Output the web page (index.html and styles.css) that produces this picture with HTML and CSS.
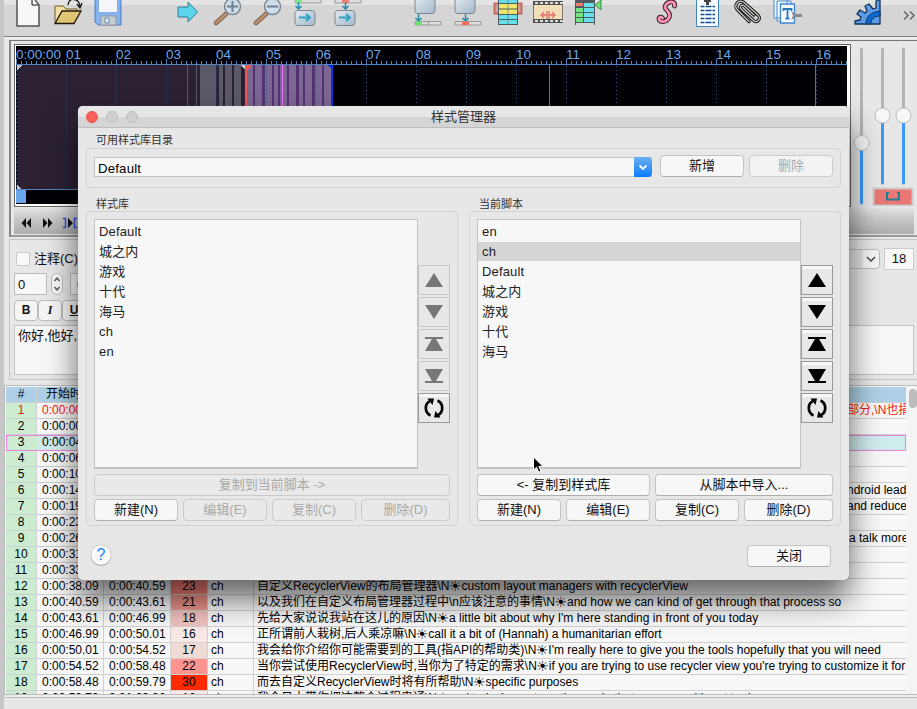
FILE: index.html
```html
<!DOCTYPE html>
<html lang="zh-CN">
<head>
<meta charset="utf-8">
<title>样式管理器</title>
<link rel="stylesheet" href="styles.css">
</head>
<body>
<svg width="0" height="0" class="defs">
  <defs>
    <linearGradient id="steel" x1="0" y1="0" x2="1" y2="1"><stop offset="0" stop-color="#e4ebf1"/><stop offset="1" stop-color="#a3b8ca"/></linearGradient>
    <symbol id="up" viewBox="0 0 30 28"><path d="M15 7 24 21H6z"/></symbol>
    <symbol id="down" viewBox="0 0 30 28"><path d="M15 21 24 7H6z"/></symbol>
    <symbol id="top" viewBox="0 0 30 28"><path d="M6 7h18v2h-7l7 12H6l7-12H6z"/></symbol>
    <symbol id="bottom" viewBox="0 0 30 28"><path d="M6 21h18v-2h-7l7-12H6l7 12H6z"/></symbol>
    <symbol id="sort" viewBox="0 0 30 28"><path d="M11.500 21.500A8.300 8.300 0 0 1 11 6.800M18.500 6.500A8.300 8.300 0 0 1 19 21.200" fill="none" stroke="currentColor" stroke-width="2.700"/><path d="M8.500 4.500H15l-1.500 6.500zM21.500 23.500H15l1.500-6.500z"/></symbol>
  </defs>
</svg>
<div class="app">
  <div class="toolbar">
    <svg viewBox="0 0 40 36"><path d="M9-3h16l6 8v21H9z" fill="#f8f8f8" stroke="#555" stroke-width="1.500"/><path d="M24-1v6h6" fill="none" stroke="#111"/></svg>
    <svg viewBox="0 0 40 36"><path d="M7 22V6h8l3 3h11v5" fill="#f1dfa5" stroke="#765b28"/><path d="M7 23.500 14 11h19l-7 12.500z" fill="#dfc574" stroke="#221a08" stroke-width="1.300"/><path d="M20 5c1-8 11-7 12 1m-3-2 3 4 2-5" fill="none" stroke="#111" stroke-width="1.300"/></svg>
    <svg viewBox="0 0 40 36"><path d="M7-3h26v28H10l-3-3z" fill="#85b3ef" stroke="#4b7cc4"/><path d="M11-1h18v13H11z" fill="#f4f6f9"/><path d="M13 16h15v9H13z" fill="#c7ccd1" stroke="#999"/><path d="M17 18h4v5h-4z" fill="#eee" stroke="#5d8bc5"/></svg>
    <i></i>
    <svg viewBox="0 0 40 36"><path d="M10 7h10V2l9.500 10L20 22v-5H10z" fill="#5bd4ec" stroke="#357b91"/></svg>
    <svg viewBox="0 0 40 36"><path d="m18 14-10 9" stroke="#785a43" stroke-width="4.500" stroke-linecap="round"/><path d="m18 14-10 9" stroke="#b99073" stroke-width="3" stroke-linecap="round"/><circle cx="24.500" cy="6.500" r="8" fill="#cedde9" stroke="#7d8790" stroke-width="1.500"/><path d="M19 6.500h11M24.500 1v11" stroke="#70808e" stroke-width="2"/></svg>
    <svg viewBox="0 0 40 36"><path d="m18 14-10 9" stroke="#785a43" stroke-width="4.500" stroke-linecap="round"/><path d="m18 14-10 9" stroke="#b99073" stroke-width="3" stroke-linecap="round"/><circle cx="24.500" cy="6.500" r="8" fill="#cedde9" stroke="#7d8790" stroke-width="1.500"/><path d="M19 6.500h11" stroke="#70808e" stroke-width="2"/></svg>
    <svg viewBox="0 0 40 36"><path d="M7-2h26v5H7z" fill="#ddd" stroke="#999"/><path d="M7-2h7v5H7z" fill="#7be98a"/><path d="M10.500 2v6m-3-2 3 3 3-3" stroke="#238daa" stroke-width="1.500" fill="none"/><rect x="7" y="10.500" width="20" height="15" rx="3" fill="url(#steel)" stroke="#7d8790"/><path d="M11 17.500h11m-4-3.500 4 3.500-4 3.500" fill="none" stroke="#2ba4c6" stroke-width="2"/></svg>
    <svg viewBox="0 0 40 36"><path d="M7-2h26v5H7z" fill="#ddd" stroke="#999"/><path d="M14-2h7v5h-7z" fill="#ed8277"/><path d="M17.500 2v6m-3-2 3 3 3-3" stroke="#238daa" stroke-width="1.500" fill="none"/><rect x="7" y="10.500" width="20" height="15" rx="3" fill="url(#steel)" stroke="#7d8790"/><path d="M11 17.500h11m-4-3.500 4 3.500-4 3.500" fill="none" stroke="#2ba4c6" stroke-width="2"/></svg>
    <i></i>
    <svg viewBox="0 0 40 36"><rect x="7" y="-4" width="20" height="17.500" rx="3" fill="url(#steel)" stroke="#7d8790"/><path d="M10.500 14v6m-3-2 3 3 3-3" stroke="#238daa" stroke-width="1.500" fill="none"/><path d="M7 21.500h26v3.500H7zM20.500 21v4" fill="#ddd" stroke="#999"/><path d="M7 21.500h7v3.500H7z" fill="#6ae36f"/></svg>
    <svg viewBox="0 0 40 36"><rect x="7" y="-4" width="20" height="17.500" rx="3" fill="url(#steel)" stroke="#7d8790"/><path d="M17.500 14v6m-3-2 3 3 3-3" stroke="#238daa" stroke-width="1.500" fill="none"/><path d="M7 21.500h26v3.500H7z" fill="#ddd" stroke="#999"/><path d="M14 21.500h7v3.500h-7z" fill="#ee6d60"/></svg>
    <svg viewBox="0 0 40 36"><path d="M6.500 3.500h27v10h-27z" fill="#d3a199" stroke="#c46b61" stroke-width="2"/><path d="M10-1h20v26H10z" fill="#4e5b62"/><path d="M11 0h18v3H11zM11 15h18v4H11zM11 20h18v4H11z" fill="#65dfea"/><path d="M11 4h18v4.500H11zM11 9.500h18V14H11z" fill="#eee56d"/><path d="M20 0v25" stroke="#697777" stroke-width=".7"/></svg>
    <svg viewBox="0 0 40 36"><path d="M5 1h30v22H5z" fill="#f0dfb7"/><path d="M5 3h30M5 21h30" stroke="#4e5052" stroke-width="4"/><path d="M7 3h28M7 21h28" stroke="#ddd" stroke-width="2" stroke-dasharray="3 2"/><path d="M5.500 5v14M34.500 5v14" stroke="#777"/><path d="M13 15h6m2 0h6M16 12l-3 3 3 3m8-6 3 3-3 3M19 11v8m2-8v8" fill="none" stroke="#e2736d" stroke-width="1.300"/></svg>
    <svg viewBox="0 0 40 36"><path d="M7-1h20v26h-1v-2H8v2H7z" fill="#50595e"/><path d="M8 3h7v3H8z" fill="#ef7d6c"/><path d="M8 8h7v4H8zM8 13h7v4H8zM8 18h7v4H8z" fill="#72e482"/><path d="M16 3h10v4H16zM16 8h10v4H16zM16 13h10v4H16zM16 18h10v4H16z" fill="#68dfea"/><path d="m27 5 6-5v10z" fill="#72df7d" stroke="#43884b"/></svg>
    <i></i>
    <svg viewBox="0 0 40 36"><path id="curl" d="M26.500 6c1-4-3-5-6-3.500-4 2-4.500 5.500-1.500 8 3.500 3 3.500 7-.5 10-3 2-7.500 1-7.500-1.500 0-2 2.500-2.500 3.500-1" fill="none" stroke="#3a232b" stroke-width="4.800" stroke-linecap="round"/><path d="M26.500 6c1-4-3-5-6-3.500-4 2-4.500 5.500-1.500 8 3.500 3 3.500 7-.5 10-3 2-7.500 1-7.500-1.500 0-2 2.500-2.500 3.500-1" fill="none" stroke="#ff91b2" stroke-width="2.800" stroke-linecap="round"/></svg>
    <svg viewBox="0 0 40 36"><path d="M8.500-2h22v28.500h-22z" fill="#fafcff" stroke="#3d83bd"/><path d="M16 0h7v2h-2v3h-3V2h-2z" fill="#444"/><path d="M12.500 6.500h14.500M12.500 10.500h14.500M12.500 14.500h14.500M12.500 18.500h14.500M12.500 22.500h14.500" stroke="#0c4f91" stroke-width="1.300" stroke-dasharray="4 1 6 1"/></svg>
    <svg viewBox="0 0 40 36"><path d="M21 21.500 9.500 10C5 5.500 11-2 16 2.500L30 15c3.500 4-1 8.500-4.500 5.500L13.500 9.500C10.500 6.500 14 4 16.500 6L26 15" fill="none" stroke="#1c1c1c" stroke-width="3.200" stroke-linecap="round"/><path d="M21 21.500 9.500 10C5 5.500 11-2 16 2.500L30 15c3.500 4-1 8.500-4.500 5.500L13.500 9.500C10.500 6.500 14 4 16.500 6L26 15" fill="none" stroke="#d2d0c8" stroke-width="1.100" stroke-linecap="round"/></svg>
    <svg viewBox="0 0 40 36"><path d="M6-2h13v20H6zM9 1h14v20H9z" fill="#edf5fc" stroke="#4a88c5"/><path d="M12.500 4h14v19h-14z" fill="#f6faff" stroke="#3e86d1" stroke-width="1.300"/><path d="M15.500 11V9h8v2M19.500 9v9.500m-2 0h4" stroke="#2876bc" stroke-width="1.800" fill="none"/><path d="m23 11 5 3h6v3h-6l-5 3 2-4.500z" fill="#858b91"/></svg>
    <i></i>
    <svg viewBox="0 0 40 36"><path d="M7 24v-3l5-1 1-3-4-3 3-4 5 3 2-2-2-5 4-2 4 5 3-1V1l4-2v25z" fill="#5c9ce8" stroke="#153153" stroke-width="1.300" stroke-linejoin="round"/><path d="M18 24c0-8 5-12 14-13v5c-6 0-9 3-9 8z" fill="#0b67d2" stroke="#15395e"/></svg>
    <svg class="more" viewBox="0 0 16 36"><path d="m1 11.500 4 4-4 4m6-8 4 4-4 4" fill="none" stroke="#666" stroke-width="1.500"/></svg>
  </div>

  <div class="video">
    <div class="wavebox">
      <svg class="wave" width="831" height="158" viewBox="16 46 831 158" shape-rendering="crispEdges">
        <defs><pattern id="ticks" x="16" y="60" width="5" height="5" patternUnits="userSpaceOnUse"><path d="M0 1h1v4H0z" fill="#5185c2"/></pattern>
        <pattern id="secs" x="16" y="58" width="50" height="131" patternUnits="userSpaceOnUse"><path d="M0 1h1v6H0z" fill="#5185c2"/><path d="M.5 8v123" stroke="#245890" stroke-dasharray="1 3"/></pattern></defs>
        <path d="M16 46h831v158H16z" fill="#000006"/>
        <path d="M17 65h228v124H17z" fill="#2b2133"/>
        <path d="M187 65h1v124h-1zM196 65h1v124h-1zM200 65h16v124h-16zM219 65h4v124h-4zM225 65h7v124h-7zM234 65h7v124h-7z" fill="#5b5968"/>
        <path d="M247 65h84v124h-84z" fill="#7c6692"/>
        <path d="M253 65h2v124h-2zM262 65h3v124h-3zM272 65h2v124h-2zM278 65h2v124h-2zM287 65h2v124h-2zM296 65h3v124h-3zM303 65h2v124h-2zM312 65h3v124h-3zM322 65h2v124h-2z" fill="#533272"/>
        <path d="M245 65h2v124h-2zM247 65h5l-5 5z" fill="#ed5650"/>
        <path d="M331 65h2v124h-2zM327 65h4v4z" fill="#0734df"/>
        <path d="M17 65h5l-5 5zM240 65h5v5zM17 185l4 4h-4z" fill="#c9c9c9"/>
        <path d="M16 60h831v5H16z" fill="url(#ticks)"/><path d="M16 58h831v131H16z" fill="url(#secs)"/>
        <path d="M282 65h1v124h-1z" fill="#f36eff"/><path d="M549 65h1v124h-1zM815 65h1v124h-1z" fill="#c633d3"/>
        <path d="M16 64h831v1H16zM16 189h831v1H16z" fill="#5185c2"/>
        <path d="M16 190h10v13H16z" fill="#69a5eb"/>
        <g class="rulertext"><text x="16" y="59" textLength="45">0:00:00</text><text x="66" y="59">01</text><text x="116" y="59">02</text><text x="166" y="59">03</text><text x="216" y="59">04</text><text x="266" y="59">05</text><text x="316" y="59">06</text><text x="366" y="59">07</text><text x="416" y="59">08</text><text x="466" y="59">09</text><text x="516" y="59">10</text><text x="566" y="59">11</text><text x="616" y="59">12</text><text x="666" y="59">13</text><text x="716" y="59">14</text><text x="766" y="59">15</text><text x="816" y="59">16</text></g>
      </svg>
    </div>
    <div class="sliders">
      <svg width="64" height="164" viewBox="852 42 64 164">
        <g stroke-width="3" stroke-linecap="round"><path d="M861.500 49v94M882.500 49v66M903.500 49v66" stroke="#b4b4b4"/><path d="M861.500 143v60M882.500 115v68M903.500 115v68" stroke="#3b99f8"/></g>
        <g fill="#f7f7f7" stroke="#bbb"><circle cx="861.500" cy="143" r="7.500"/><circle cx="882.500" cy="115.500" r="7.500"/><circle cx="903.500" cy="115.500" r="7.500"/></g>
        <path d="M873.500 188.500h39v17h-39z" fill="#e97773" stroke="#ccc" stroke-width="2"/><path d="M887 193v6.500h12V193m-13 0h3m8 0h3" fill="none" stroke="#247e93" stroke-width="2"/>
      </svg>
    </div>
    <div class="transport">
      <svg width="70" height="26" viewBox="14 208 70 26"><path d="m26 218-4.500 5 4.500 5zM31 218l-4.500 5 4.500 5zM43 218l4.500 5-4.500 5zM48 218l4.500 5-4.500 5zM68 218l5 5-5 5z" fill="#111"/><path d="M63 218.500h2.500v9H63M77 218.500h-2.500v9H77" fill="none" stroke="#3550dc" stroke-width="1.500"/></svg>
    </div>
  </div>

  <div class="editor">
    <div class="erow one"><span class="check"></span><span>注释(C)</span><span class="fontcombo"><svg width="16" height="18"><path d="m4 7 4 4 4-4" fill="none" stroke="#444" stroke-width="1.500"/></svg></span><span class="size">18</span></div>
    <div class="erow two"><span class="num">0</span><svg class="spin" width="12" height="22"><rect x=".5" y=".5" width="11" height="21" rx="5" fill="#f7f7f7" stroke="#bbb"/><path d="m3.500 8 2.500-3 2.500 3M3.500 14l2.500 3 2.500-3" fill="none" stroke="#555" stroke-width="1.400"/></svg><span class="num second">0</span></div>
    <div class="erow three"><b>B</b><em>I</em><u>U</u></div>
    <div class="textarea">你好,他好,大</div>
  </div>

  <div class="gridwrap">
    <div class="grid">
      <div class="r head"><span>#</span><span>开始时间</span><span></span><span></span><span></span><span></span></div>
      <div class="r red"><span>1</span><span>0:00:00</span><span></span><span></span><span></span><span class="tail">部分,\N也捐</span></div>
      <div class="r"><span>2</span><span>0:00:00</span><span></span><span></span><span></span><span></span></div>
      <div class="r sel"><span>3</span><span>0:00:04</span><span></span><span></span><span></span><span></span></div>
      <div class="r"><span>4</span><span>0:00:06</span><span></span><span></span><span></span><span></span></div>
      <div class="r"><span>5</span><span>0:00:10</span><span></span><span></span><span></span><span></span></div>
      <div class="r"><span>6</span><span>0:00:14</span><span></span><span></span><span></span><span class="tail">ndroid lead</span></div>
      <div class="r"><span>7</span><span>0:00:19</span><span></span><span></span><span></span><span class="tail">and reduce</span></div>
      <div class="r"><span>8</span><span>0:00:23</span><span></span><span></span><span></span><span></span></div>
      <div class="r"><span>9</span><span>0:00:26</span><span></span><span></span><span></span><span class="tail late">a talk more</span></div>
      <div class="r"><span>10</span><span>0:00:31</span><span></span><span></span><span></span><span></span></div>
      <div class="r"><span>11</span><span>0:00:33</span><span></span><span></span><span></span><span></span></div>
      <div class="r"><span>12</span><span>0:00:38.09</span><span>0:00:40.59</span><span class="c23">23</span><span>ch</span><span>自定义RecyclerView的布局管理器\N<s>☀</s>custom layout managers with recyclerView</span></div>
      <div class="r"><span>13</span><span>0:00:40.59</span><span>0:00:43.61</span><span class="c21">21</span><span>ch</span><span>以及我们在自定义布局管理器过程中\n应该注意的事情\N<s>☀</s>and how we can kind of get through that process so</span></div>
      <div class="r"><span>14</span><span>0:00:43.61</span><span>0:00:46.99</span><span class="c18">18</span><span>ch</span><span>先给大家说说我站在这儿的原因\N<s>☀</s>a little bit about why I'm here standing in front of you today</span></div>
      <div class="r"><span>15</span><span>0:00:46.99</span><span>0:00:50.01</span><span class="c16">16</span><span>ch</span><span>正所谓前人栽树,后人乘凉嘛\N<s>☀</s>call it a bit of (Hannah) a humanitarian effort</span></div>
      <div class="r"><span>16</span><span>0:00:50.01</span><span>0:00:54.52</span><span class="c17">17</span><span>ch</span><span>我会给你介绍你可能需要到的工具(指API的帮助类)\N<s>☀</s>I'm really here to give you the tools hopefully that you will need</span></div>
      <div class="r"><span>17</span><span>0:00:54.52</span><span>0:00:58.48</span><span class="c22">22</span><span>ch</span><span>当你尝试使用RecyclerView时,当你为了特定的需求\N<s>☀</s>if you are trying to use recycler view you're trying to customize it for</span></div>
      <div class="r"><span>18</span><span>0:00:58.48</span><span>0:00:59.79</span><span class="c30">30</span><span>ch</span><span>而去自定义RecyclerView时将有所帮助\N<s>☀</s>specific purposes</span></div>
      <div class="r"><span>19</span><span>0:00:59.79</span><span>0:01:03.36</span><span class="c16">16</span><span>ch</span><span>我今日大带你把这整个过程串通\N<s>☀</s>and to laying out another node that can now with out to do</span></div>
    </div>
    <div class="scroll"><i></i></div>
  </div>
</div>

<div class="dialog">
  <div class="title"><span class="lights"><i></i><i></i><i></i></span>样式管理器</div>
  <div class="label">可用样式库目录</div>
  <div class="group catalog">
    <div class="combo"><span>Default</span><svg width="18" height="20"><path d="m5.500 8.500 3.500 3.500 3.500-3.500" fill="none" stroke="#fff" stroke-width="1.800"/></svg></div>
    <button>新增</button><button disabled>删除</button>
  </div>
  <div class="columns">
    <div class="col">
      <div class="label">样式库</div>
      <div class="group storage">
        <div class="pick">
          <ul><li>Default</li><li>城之内</li><li>游戏</li><li>十代</li><li>海马</li><li>ch</li><li>en</li></ul>
          <div class="moves"><span class="off"><svg><use href="#up"/></svg></span><span class="off"><svg><use href="#down"/></svg></span><span class="off"><svg><use href="#top"/></svg></span><span class="off"><svg><use href="#bottom"/></svg></span><span><svg><use href="#sort"/></svg></span></div>
        </div>
        <div class="actions"><button class="full" disabled>复制到当前脚本 -&gt;</button><button>新建(N)</button><button disabled>编辑(E)</button><button disabled>复制(C)</button><button disabled>删除(D)</button></div>
      </div>
    </div>
    <div class="col">
      <div class="label">当前脚本</div>
      <div class="group storage">
        <div class="pick">
          <ul><li>en</li><li class="on">ch</li><li>Default</li><li>城之内</li><li>游戏</li><li>十代</li><li>海马</li></ul>
          <div class="moves"><span><svg><use href="#up"/></svg></span><span><svg><use href="#down"/></svg></span><span><svg><use href="#top"/></svg></span><span><svg><use href="#bottom"/></svg></span><span><svg><use href="#sort"/></svg></span></div>
        </div>
        <div class="actions"><button class="half">&lt;- 复制到样式库</button><button class="half">从脚本中导入...</button><button>新建(N)</button><button>编辑(E)</button><button>复制(C)</button><button>删除(D)</button></div>
      </div>
    </div>
  </div>
  <div class="foot"><span class="help">?</span><button>关闭</button></div>
</div>
<svg class="cursor" width="13" height="19"><path d="M1.500 1v13l3-2.800 2.200 5 2.300-1-2.200-4.800h4.200z" fill="#000" stroke="#fff"/></svg>
</body>
</html>
```
FILE: styles.css
```css
* { box-sizing: border-box; }
body {
  margin: 0; width: 917px; height: 709px; overflow: hidden; position: relative;
  background: #c6c6c6; color: #111;
  font: 13px/20px "Liberation Sans", "Noto Sans CJK SC", sans-serif;
}
.defs { position: absolute; }
.app { margin-left: 4px; height: 709px; background: #e7e7e7; display: flex; flex-direction: column; overflow: hidden; }
.toolbar {
  height: 39px; flex: none; padding-left: 4px; display: grid; grid-template-columns: repeat(22, 40px) 14px;
  background: linear-gradient(#e4e4e4 5px, #d5d5d5 5px, #d5d5d5 36px, #777 36px, #888 37px, #eee 37px);
}
.toolbar svg { width: 40px; height: 36px; }
.toolbar .more { width: 16px; margin-left: 15px; }

.video {
  flex: none; height: 197px; margin: 1px 0 0 5px; padding: 3px 0 0 3px;
  border-top: 1px solid #777; border-left: 2px solid #888; border-bottom: 2px solid #999;
  display: grid; grid-template-columns: 837px 1fr; grid-template-rows: 163px 26px; row-gap: 1px;
}
.wavebox { border: 1px solid #666; background: #fff; padding: 1px; height: 163px; margin: 0; }
.wave { display: block; }
.rulertext { font: 13.500px "Liberation Sans", sans-serif; fill: #6ea6ea; }
.sliders { margin: -2px 0 0 1px; }
.sliders svg { display: block; }
.transport { grid-column: 1 / 3; margin-right: 3px; background: linear-gradient(#e3e3e3, #c9c9c9 40%, #adadad); }

.editor {
  flex: none; height: 141px; margin: 2px 0 0 5px; padding: 8px 0 0 4px;
  border: 1px solid #c4c4c4; border-right: 0; display: flex; flex-direction: column;
}
.erow { display: flex; align-items: center; flex: none; }
.one { height: 21px; }
.check { width: 14px; height: 14px; margin: 0 4px 0 2px; background: #f8f8f8; border: 1px solid #c8c8c8; border-radius: 2px; }
.fontcombo { width: 80px; margin-left: auto; height: 20px; border: 1px solid #bcbcbc; border-radius: 4px; background: linear-gradient(90deg, #e4e4e4 62px, #f6f6f6 62px); text-align: right; line-height: 16px; }
.size { width: 30px; height: 22px; margin: 0 3px 0 4px; border: 1px solid #ccc; background: #f8f8f8; text-align: center; }
.two { height: 22px; margin-top: 4px; }
.num { width: 33px; height: 22px; border: 1px solid #bbb; background: #f7f7f7; padding-left: 3px; line-height: 22px; }
.num.second { padding-left: 6px; }
.spin { margin: 0 7px 0 4px; }
.three { height: 21px; margin-top: 5px; gap: 0; }
.three > * { width: 24px; height: 21px; border: 1px solid #bbb; border-radius: 4px; background: #f5f5f5; text-align: center; font: bold 12px/19px "Liberation Sans", sans-serif; }
.three em { font: italic bold 12px/19px "Liberation Serif", serif; }
.textarea { height: 50px; margin: 4px 3px 0 0; padding-left: 3px; border: 1px solid #c4c4c4; background: #f7f7f7; line-height: 19px; }

.gridwrap { height: 310px; margin-top: 5px; display: flex; flex: none; border: 1px solid #bbb; border-right: 0; background: #f4f4f4; box-shadow: 0 2px #eee, 0 3px #bbb; }
.grid { width: 903px; padding: 1px 0 0 1px; overflow: hidden; }
.r { display: grid; grid-template-columns: 31px 67px 67px 37px 46px 653px; height: 16px; font-size: 12px; line-height: 15px; color: #000; background: #f7f7f7; }
.r span { border-right: 1px solid #d0d0d0; border-bottom: 1px solid #d0d0d0; padding-left: 3px; white-space: pre; overflow: hidden; height: 16px; }
.r span:nth-child(1) { background: #cbecd1; text-align: center; padding: 0; }
.r span:nth-child(2) { padding-left: 5px; }
.r span:nth-child(3) { padding-left: 5px; }
.r span:nth-child(4) { text-align: center; padding: 0; }
.r span:nth-child(6) { padding-left: 3px; }
.r span.tail:nth-child(6) { padding-left: 593px; }
.r span.late:nth-child(6) { padding-left: 595px; }
.r.head { background: #add0e6; }
.r.head span:nth-child(1) { background: #add0e6; }
.r.head span:nth-child(2) { padding-left: 9px; }
.r.red { color: #f21b0c; }
.r.sel { background: #cfecec; outline: 1px solid #ec83dc; outline-offset: -1px; position: relative; }
.r.sel span { border-color: transparent; }
.r s { text-decoration: none; display: inline-block; width: 12px; height: 14px; font: 14px/15px "DejaVu Sans", sans-serif; vertical-align: top; text-indent: -.5px; }
.c23 { background: #ff827a; } .c21 { background: #f0958b; } .c18 { background: #efc0bc; } .c16 { background: #f9e8e5; }
.c17 { background: #f0dad4; } .c22 { background: #ff9390; } .c30 { background: #ff2a00; }
.scroll { flex: 1; padding: 3px 0 0 3px; }
.scroll i { display: block; width: 8px; height: 19px; border-radius: 4px; background: #bcbcbc; }

.dialog {
  position: absolute; left: 78px; top: 106px; width: 771px; height: 474px; border-radius: 5px; background: #e7e7e7;
  box-shadow: 0 0 1px #777, 0 19px 32px rgba(0, 0, 0, .6);
}
.title { height: 22px; text-align: center; line-height: 22px; color: #333; border-bottom: 1px solid #bdbdbd; border-radius: 5px 5px 0 0; background: linear-gradient(#e6e6e6 11px, #d5d5d5 11px); }
.lights { float: left; display: flex; gap: 8px; padding: 5px 0 0 8px; margin-right: -60px; }
.lights i { width: 12px; height: 12px; border-radius: 50%; background: #d0d0d0; border: 1px solid #bdbdbd; }
.lights i:first-child { background: #fc605b; border-color: #ef504c; }
.label { height: 20px; padding: 4px 0 0 18px; font-size: 11px; line-height: 16px; color: #333; }
.group { border: 1px solid #d3d3d3; border-radius: 4px; }
.catalog { margin: 0 8px; height: 40px; padding: 6px 7px; display: flex; align-items: flex-start; }
button {
  width: 84px; height: 22px; padding: 0 0 1px; border: 1px solid #c4c4c4; border-bottom-color: #aeaeae; border-radius: 4px; background: #f7f7f7; color: #111;
  font: 13px/18px "Liberation Sans", "Noto Sans CJK SC", sans-serif; white-space: nowrap;
}
button:disabled { background: #e9e9e9; color: #aaa; border-color: #cbcbcb; }
.catalog button { margin-right: 5px; flex: none; }
.catalog button:disabled { background: #f3f3f3; margin: 0; }
.combo { flex: none; width: 558px; height: 20px; margin: 2px 8px 0 0; display: flex; justify-content: space-between; border: 1px solid #c2c2c2; border-right: 0; background: #f7f7f7; }
.combo span { padding-left: 3px; line-height: 21px; letter-spacing: .2px; font-size: 13.200px; color: #000; }
.combo svg { flex: none; margin-top: -1px; border-radius: 0 4px 4px 0; background: linear-gradient(#6caef4, #3f96f8 50%, #087cff); }
.columns { display: flex; gap: 11px; padding: 0 8px; margin-top: 4px; }
.col { width: 372px; }
.col .label { padding-left: 10px; height: 19px; }
.storage { height: 315px; padding: 7px; }
.pick { display: flex; height: 250px; }
ul { margin: 0; padding: 2px 0 0; width: 324px; list-style: none; background: #f7f7f7; border: 1px solid #c2c2c2; border-width: 1px 1px 2px; }
li { height: 20px; padding-left: 4px; line-height: 20px; letter-spacing: .15px; color: #222; }
.on { background: linear-gradient(#d6d6d6 19px, transparent 19px); }
.moves { padding-top: 46px; display: flex; flex-direction: column; gap: 2px; }
.moves span { width: 32px; height: 30px; border: 1px solid #999; background: linear-gradient(#f7f7f7 3px, #e8e8e8 3px); color: #000; }
.moves .off { border-color: #c4c4c4; color: #777; background: #e7e7e7; }
.moves svg { display: block; width: 30px; height: 28px; fill: currentColor; }
.actions { display: grid; grid-template-columns: 84px 84px 84px 89px; column-gap: 5px; row-gap: 3px; padding-top: 5px; }
.actions button { width: 100%; }
.actions .full { grid-column: 1 / 5; }
.actions .half { grid-column: span 2; }
.foot { display: flex; justify-content: space-between; align-items: center; padding: 19px 18px 0 13px; }
.help { width: 20px; height: 20px; margin-top: -3px; border-radius: 50%; background: #fafafa; box-shadow: 0 0 1px #888, 0 1px 1px #aaa; color: #1684f5; text-align: center; font: 16px/20px "Liberation Sans", sans-serif; }
.cursor { position: absolute; left: 532px; top: 456px; }
```
